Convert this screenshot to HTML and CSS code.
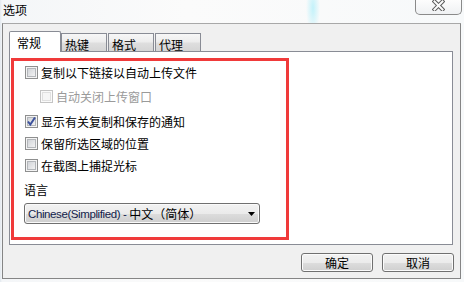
FILE: index.html
```html
<!DOCTYPE html>
<html lang="zh-CN">
<head>
<meta charset="utf-8">
<title>选项</title>
<link rel="stylesheet" href="styles.css">
</head>
<body>
<div class="window">
  <div class="titlebar">
    <span class="title">选项</span>
    <div class="close">
      <svg width="13" height="11" viewBox="0 0 13 11">
        <path d="M2.5 1.5 L10.5 9.5 M10.5 1.5 L2.5 9.5" stroke="#5a5a5a" stroke-width="4" stroke-linecap="square" fill="none"/>
        <path d="M2.5 1.5 L10.5 9.5 M10.5 1.5 L2.5 9.5" stroke="#fbfbfb" stroke-width="2" stroke-linecap="square" fill="none"/>
      </svg>
    </div>
  </div>
  <div class="client">
    <div class="tabs">
      <div class="tab active">常规</div>
      <div class="tab">热键</div>
      <div class="tab">格式</div>
      <div class="tab">代理</div>
    </div>
    <div class="panel">
      <div class="highlight">
        <div class="row r1"><span class="cb"></span><span>复制以下链接以自动上传文件</span></div>
        <div class="row r2 disabled"><span class="cb"></span><span>自动关闭上传窗口</span></div>
        <div class="row r3"><span class="cb checked"><svg width="11" height="11" viewBox="0 0 11 11"><path d="M2 5.5 L4.3 8.5 L9 1.5" stroke="#3c519c" stroke-width="2" fill="none"/></svg></span><span>显示有关复制和保存的通知</span></div>
        <div class="row r4"><span class="cb"></span><span>保留所选区域的位置</span></div>
        <div class="row r5"><span class="cb"></span><span>在截图上捕捉光标</span></div>
        <div class="lang-label">语言</div>
        <div class="select">
          <span class="latin">Chinese(Simplified) - </span><span>中文（简体）</span>
          <svg class="arrow" width="7" height="4" viewBox="0 0 7 4"><polygon points="0,0 7,0 3.5,4" fill="#000"/></svg>
        </div>
      </div>
    </div>
    <div class="buttons">
      <div class="btn">确定</div>
      <div class="btn">取消</div>
    </div>
  </div>
</div>
</body>
</html>
```

FILE: styles.css
```css
* {
  box-sizing: border-box;
  margin: 0;
  padding: 0;
}

html, body {
  width: 464px;
  height: 282px;
  overflow: hidden;
}

body {
  font-family: "Noto Sans CJK SC", sans-serif;
  font-size: 12px;
  color: #000;
  background: #eef2f5;
}

.window {
  width: 464px;
  height: 282px;
  display: flex;
  flex-direction: column;
  background:
    radial-gradient(ellipse 7px 26px at 313px 8px, rgba(185, 240, 250, 0.85), rgba(185, 240, 250, 0) 100%),
    linear-gradient(90deg, #e2e8ee 0, #f4f6f8 2px, #fbfbfb 40%, #f7f9fa 100%);
}

.titlebar {
  height: 23px;
  display: flex;
  align-items: flex-start;
}

.title {
  padding: 2px 0 0 3px;
  line-height: 16px;
}

.close {
  margin-left: auto;
  margin-right: 2px;
  width: 47px;
  height: 15px;
  border: 1px solid #8a8a8a;
  border-top: 0;
  border-radius: 0 0 5px 5px;
  background: linear-gradient(#fdfdfd, #eff1f3);
  display: flex;
  justify-content: center;
  padding-top: 0;
}

.client {
  margin: 0 3px 0 2px;
  height: 256px;
  border: 1px solid #858585;
  border-top-color: #a8a8a8;
  background: #f0f0f0;
}

.tabs {
  display: flex;
  align-items: flex-end;
  height: 20px;
  margin: 7px 0 0 6px;
}

.tab {
  height: 18px;
  width: 46px;
  border: 1px solid #898c95;
  border-bottom: 0;
  background: linear-gradient(#f7f7f7, #ededed 45%, #dedede 55%, #d5d5d5);
  padding: 4px 0 0 3px;
  line-height: 14px;
  margin-left: 1px;
}

.tab.active {
  height: 21px;
  width: 52px;
  margin: 0 0 -1px 0;
  background: #fff;
  padding: 4px 0 0 7px;
  position: relative;
  z-index: 1;
  border-radius: 2px 2px 0 0;
}

.tab.active + .tab {
  margin-left: 0;
}

.panel {
  margin-left: 6px;
  width: 444px;
  height: 194px;
  border: 1px solid #898c95;
  background: #fff;
}

.highlight {
  margin: 6px 0 0 1px;
  width: 278px;
  height: 182px;
  border: 3px solid #f03a3a;
  padding-left: 11px;
  display: flex;
  flex-direction: column;
  align-items: flex-start;
}

.row {
  display: flex;
  align-items: center;
  height: 13px;
  line-height: 13px;
  white-space: nowrap;
}

.r1 { margin-top: 5px; }
.r2 { margin-top: 11px; padding-left: 15px; color: #9a9a9a; }
.r3 { margin-top: 12px; }
.r4, .r5 { margin-top: 9px; }

.cb {
  width: 13px;
  height: 13px;
  flex: none;
  margin-right: 3px;
  border: 1px solid #8e8f8f;
  background: linear-gradient(135deg, #cdd0d5 10%, #f6f6f6 90%);
  box-shadow: inset 0 0 0 1px #f4f4f4, inset 0 0 0 2px #b3b6ba;
  display: flex;
  align-items: center;
  justify-content: center;
}

.disabled .cb {
  border-color: #c4c4c4;
  background: #f6f6f6;
  box-shadow: inset 0 0 0 1px #fafafa, inset 0 0 0 2px #e0e0e0;
}

.lang-label {
  margin: 11px 0 0 -1px;
  line-height: 14px;
}

.select {
  margin: 6px 0 0 -1px;
  width: 236px;
  height: 21px;
  display: flex;
  align-items: center;
  padding-left: 3px;
  border: 1px solid #707070;
  border-radius: 3px;
  background: linear-gradient(#f2f2f2, #ebebeb 50%, #dddddd 51%, #cfcfcf);
  box-shadow: inset 0 0 0 1px #fafafa;
  white-space: nowrap;
  line-height: 14px;
}

.latin {
  font-family: "Liberation Sans", sans-serif;
  font-size: 11.5px;
  letter-spacing: -0.4px;
  color: #121c4a;
  white-space: pre;
}

.arrow {
  margin-left: auto;
  margin-right: 4px;
}

.buttons {
  display: flex;
  justify-content: flex-end;
  gap: 9px;
  margin: 8px 6px 0 0;
}

.btn {
  width: 72px;
  height: 19px;
  border: 1px solid #707070;
  border-radius: 3px;
  background: linear-gradient(#f2f2f2, #ebebeb 50%, #dddddd 51%, #cfcfcf);
  box-shadow: inset 0 0 0 1px #fbfbfb;
  text-align: center;
  line-height: 17px;
}
```
